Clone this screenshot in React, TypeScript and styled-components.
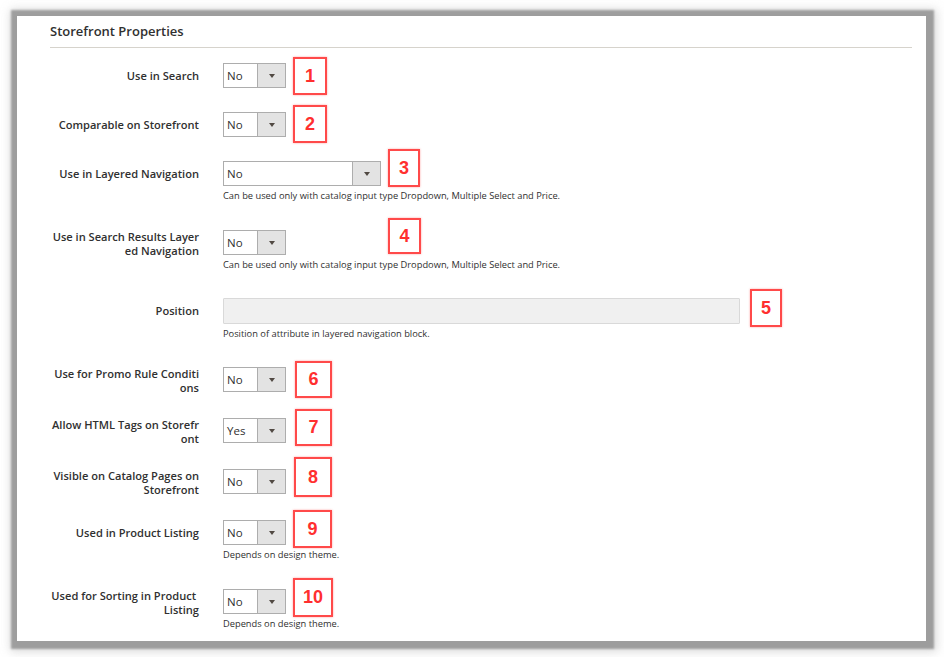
import React from "react";
import styled, { createGlobalStyle } from "styled-components";

const Global = createGlobalStyle`
  html, body { margin: 0; padding: 0; background: #ffffff; }
  body { font-family: "Open Sans", "DejaVu Sans", sans-serif; color: #303030; }
  * { box-sizing: border-box; }
`;

const Page = styled.div`
  padding: 16px 0 0 17px;
  width: 944px;
  height: 657px;
`;

const Card = styled.section`
  width: 909px;
  height: 625px;
  background: #ffffff;
  box-shadow: 1px 1px 2px 7px rgba(140, 140, 140, 0.8), 2px 2px 9px 9px rgba(160, 160, 160, 0.35);
  padding: 5px 14px 0 33px;
`;

const Header = styled.h2`
  margin: 0;
  font-size: 13px;
  font-weight: 600;
  color: #303030;
  line-height: 20px;
  padding-bottom: 6px;
  border-bottom: 1px solid #d6d3cc;
`;

const Fields = styled.div`
  display: flex;
  flex-direction: column;
  padding-top: 15px;
`;

const Row = styled.div<{ $mt: number }>`
  display: grid;
  grid-template-columns: 150px 1fr;
  column-gap: 23px;
  margin-top: ${(p) => p.$mt}px;
`;

const Label = styled.label`
  align-self: start;
  min-height: 25px;
  display: flex;
  align-items: center;
  justify-content: flex-end;
  text-align: right;
  font-size: 11.1px;
  font-weight: 600;
  line-height: 14px;
  color: #303030;
  padding-right: 1px;
`;

const LabelLine = styled.span`
  display: block;
  white-space: pre;
`;

const Control = styled.div`
  position: relative;
  display: flex;
  flex-direction: column;
  align-items: flex-start;
`;

const Select = styled.div<{ $w: number }>`
  width: ${(p) => p.$w}px;
  height: 25px;
  display: flex;
  border: 1px solid #adadad;
  background: #ffffff;
`;

const SelectValue = styled.span`
  flex: 1;
  font-size: 11.5px;
  line-height: 23px;
  padding-left: 3px;
  color: #303030;
`;

const SelectArrow = styled.span`
  width: 28px;
  border-left: 1px solid #adadad;
  background: #e3e3e3;
  display: flex;
  align-items: center;
  justify-content: center;
  &::after {
    content: "";
    width: 0;
    height: 0;
    border-left: 3px solid transparent;
    border-right: 3px solid transparent;
    border-top: 4px solid #514943;
  }
`;

const TextInput = styled.div`
  width: 517px;
  height: 26px;
  background: #f0f0f0;
  border: 1px solid #d9d9d9;
  border-radius: 1px;
`;

const Note = styled.div`
  font-size: 9.3px;
  line-height: 14px;
  margin-top: 3px;
  padding-bottom: 3px;
  color: #303030;
  white-space: nowrap;
`;

const Marker = styled.div<{ $l: number; $t: number; $w: number; $h: number }>`
  position: absolute;
  left: ${(p) => p.$l}px;
  top: ${(p) => p.$t}px;
  width: ${(p) => p.$w}px;
  height: ${(p) => p.$h}px;
  border: 2px solid #ff4a4a;
  box-shadow: 0 0 2px rgba(255, 60, 60, 0.45);
  display: flex;
  align-items: center;
  justify-content: center;
  font-family: "Liberation Sans", Arial, sans-serif;
  font-weight: 700;
  font-size: 18px;
  color: #ff2f2f;
`;

type Field = {
  label: string[];
  kind: "select" | "input";
  value?: string;
  w?: number;
  note?: string;
  mt: number;
  mark: [number, number, number, number];
};

const NAV_NOTE =
  "Can be used only with catalog input type Dropdown, Multiple Select and Price.";
const THEME_NOTE = "Depends on design theme.";

const fields: Field[] = [
  { label: ["Use in Search"], kind: "select", value: "No", w: 63, mt: 0, mark: [70, -6, 34, 38] },
  { label: ["Comparable on Storefront"], kind: "select", value: "No", w: 63, mt: 24, mark: [70, -7, 34, 38] },
  { label: ["Use in Layered Navigation"], kind: "select", value: "No", w: 158, note: NAV_NOTE, mt: 24, mark: [165, -12, 32, 38] },
  { label: ["Use in Search Results Layer", "ed Navigation"], kind: "select", value: "No", w: 63, note: NAV_NOTE, mt: 24, mark: [165, -12, 33, 36] },
  { label: ["Position"], kind: "input", note: "Position of attribute in layered navigation block.", mt: 23, mark: [527, -9, 32, 38] },
  { label: ["Use for Promo Rule Conditi", "ons"], kind: "select", value: "No", w: 63, mt: 23, mark: [72, -6, 37, 37] },
  { label: ["Allow HTML Tags on Storefr", "ont"], kind: "select", value: "Yes", w: 63, mt: 23, mark: [72, -9, 37, 37] },
  { label: ["Visible on Catalog Pages on", "Storefront"], kind: "select", value: "No", w: 63, mt: 23, mark: [71, -12, 38, 40] },
  { label: ["Used in Product Listing"], kind: "select", value: "No", w: 63, note: THEME_NOTE, mt: 23, mark: [70, -10, 39, 38] },
  { label: ["Used for Sorting in Product ", "Listing"], kind: "select", value: "No", w: 63, note: THEME_NOTE, mt: 24, mark: [70, -11, 40, 39] },
];

export default function App() {
  return (
    <>
      <Global />
      <Page>
        <Card>
          <Header>Storefront Properties</Header>
          <Fields>
            {fields.map((f, i) => (
              <Row key={i} $mt={f.mt}>
                <Label>
                  <span>
                    {f.label.map((line, j) => (
                      <LabelLine key={j}>{line}</LabelLine>
                    ))}
                  </span>
                </Label>
                <Control>
                  {f.kind === "select" ? (
                    <Select $w={f.w ?? 63}>
                      <SelectValue>{f.value}</SelectValue>
                      <SelectArrow />
                    </Select>
                  ) : (
                    <TextInput />
                  )}
                  {f.note && <Note>{f.note}</Note>}
                  <Marker $l={f.mark[0]} $t={f.mark[1]} $w={f.mark[2]} $h={f.mark[3]}>
                    {i + 1}
                  </Marker>
                </Control>
              </Row>
            ))}
          </Fields>
        </Card>
      </Page>
    </>
  );
}
